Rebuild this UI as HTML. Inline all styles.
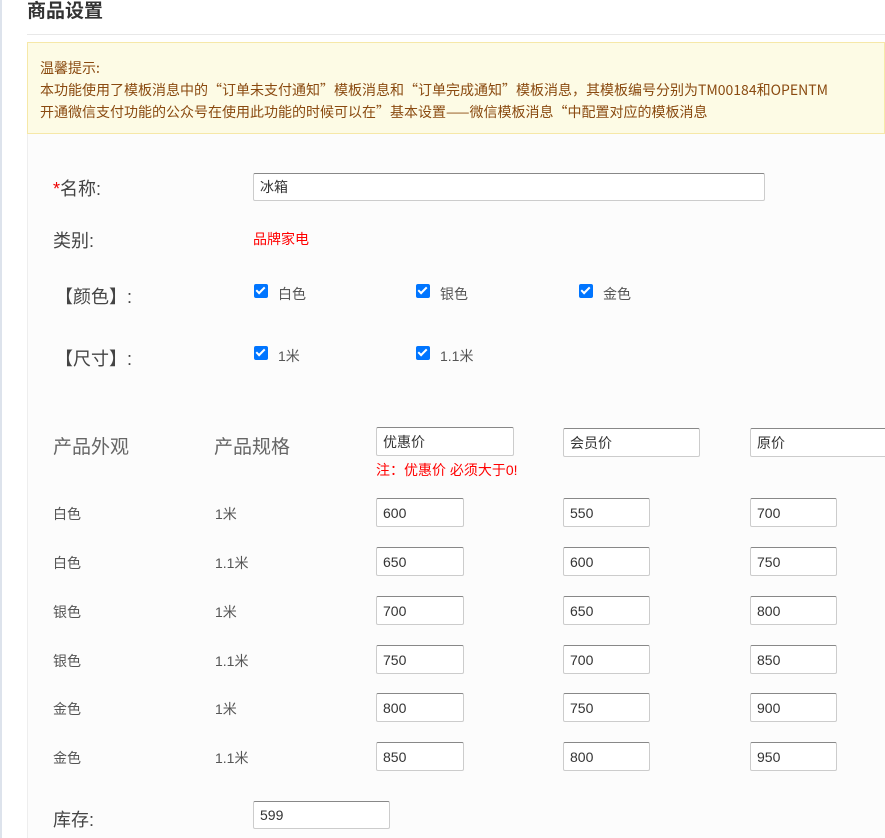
<!DOCTYPE html><html><head><meta charset="utf-8"><style>
body{margin:0;width:885px;height:838px;overflow:hidden;background:#fff;font-family:"Liberation Sans","Noto Sans CJK SC",sans-serif;position:relative;color:#555}
.a{position:absolute;white-space:nowrap}
.in{position:absolute;box-sizing:border-box;border:1px solid #ccc;border-top-color:#888;background:#fff;font-size:14px;color:#333;padding:0 6px;display:flex;align-items:center;height:29px;border-radius:2px}
.cb{position:absolute;width:14px;height:14px;background:#0075ff;border-radius:2px}
.cb:after{content:"";position:absolute;left:4px;top:1px;width:3px;height:7px;border:solid #fff;border-width:0 2px 2px 0;transform:rotate(45deg)}
.l{font-size:18px;color:#444}
.s{font-size:14px;color:#555}
</style></head><body>
<div class="a" style="left:0;top:0;width:2px;height:838px;background:#dde3ec"></div>
<div class="a" style="left:27px;top:0;font-size:19px;font-weight:bold;color:#333;line-height:24px">商品设置</div>
<div class="a" style="left:27px;top:34px;width:858px;height:1px;background:#e8e8e8"></div>
<div class="a" style="left:27px;top:42px;width:858px;height:796px;background:#fcfcfc;border-left:1px solid #eee"></div>
<div class="a" style="left:27px;top:42px;width:858px;height:92px;background:#fdfbe5;border:1px solid #f6e8a8;box-sizing:border-box"></div>
<div class="a" style="left:40px;top:57px;font-size:14px;line-height:22px;color:#8a4a10;font-family:'Noto Sans CJK SC',sans-serif">温馨提示:<br>本功能使用了模板消息中的“订单未支付通知”模板消息和“订单完成通知”模板消息，其模板编号分别为TM00184和OPENTM<br>开通微信支付功能的公众号在使用此功能的时候可以在”基本设置——微信模板消息“中配置对应的模板消息</div>
<div class="a l" style="left:53px;top:175px"><span style="color:#e00">*</span>名称:</div>
<div class="in" style="left:253px;top:173px;width:512px;height:28px">冰箱</div>
<div class="a l" style="left:53px;top:227px">类别:</div>
<div class="a" style="left:253px;top:229px;font-size:14px;color:#f00">品牌家电</div>
<div class="a l" style="left:55px;top:283px">【颜色】:</div>
<div class="cb" style="left:254px;top:284px"></div><div class="a s" style="left:278px;top:284px">白色</div>
<div class="cb" style="left:416px;top:284px"></div><div class="a s" style="left:440px;top:284px">银色</div>
<div class="cb" style="left:579px;top:284px"></div><div class="a s" style="left:603px;top:284px">金色</div>
<div class="a l" style="left:55px;top:345px">【尺寸】:</div>
<div class="cb" style="left:254px;top:346px"></div><div class="a s" style="left:278px;top:346px">1米</div>
<div class="cb" style="left:416px;top:346px"></div><div class="a s" style="left:440px;top:346px">1.1米</div>
<div class="a l" style="left:53px;top:432px;color:#666;font-size:19px">产品外观</div>
<div class="a l" style="left:214px;top:432px;color:#666;font-size:19px">产品规格</div>
<div class="in" style="left:376px;top:427px;width:138px">优惠价</div>
<div class="in" style="left:563px;top:428px;width:137px">会员价</div>
<div class="in" style="left:750px;top:428px;width:140px">原价</div>
<div class="a" style="left:376px;top:460px;font-size:14px;color:#f00">注：优惠价 必须大于0!</div>
<div class="a s" style="left:53px;top:504px">白色</div><div class="a s" style="left:215px;top:504px">1米</div>
<div class="in" style="left:376px;top:498px;width:88px">600</div><div class="in" style="left:563px;top:498px;width:87px">550</div><div class="in" style="left:750px;top:498px;width:87px">700</div>
<div class="a s" style="left:53px;top:553px">白色</div><div class="a s" style="left:215px;top:553px">1.1米</div>
<div class="in" style="left:376px;top:547px;width:88px">650</div><div class="in" style="left:563px;top:547px;width:87px">600</div><div class="in" style="left:750px;top:547px;width:87px">750</div>
<div class="a s" style="left:53px;top:602px">银色</div><div class="a s" style="left:215px;top:602px">1米</div>
<div class="in" style="left:376px;top:596px;width:88px">700</div><div class="in" style="left:563px;top:596px;width:87px">650</div><div class="in" style="left:750px;top:596px;width:87px">800</div>
<div class="a s" style="left:53px;top:651px">银色</div><div class="a s" style="left:215px;top:651px">1.1米</div>
<div class="in" style="left:376px;top:645px;width:88px">750</div><div class="in" style="left:563px;top:645px;width:87px">700</div><div class="in" style="left:750px;top:645px;width:87px">850</div>
<div class="a s" style="left:53px;top:699px">金色</div><div class="a s" style="left:215px;top:699px">1米</div>
<div class="in" style="left:376px;top:693px;width:88px">800</div><div class="in" style="left:563px;top:693px;width:87px">750</div><div class="in" style="left:750px;top:693px;width:87px">900</div>
<div class="a s" style="left:53px;top:748px">金色</div><div class="a s" style="left:215px;top:748px">1.1米</div>
<div class="in" style="left:376px;top:742px;width:88px">850</div><div class="in" style="left:563px;top:742px;width:87px">800</div><div class="in" style="left:750px;top:742px;width:87px">950</div>
<div class="a l" style="left:53px;top:806px">库存:</div>
<div class="in" style="left:253px;top:801px;width:137px;height:28px">599</div>
</body></html>
